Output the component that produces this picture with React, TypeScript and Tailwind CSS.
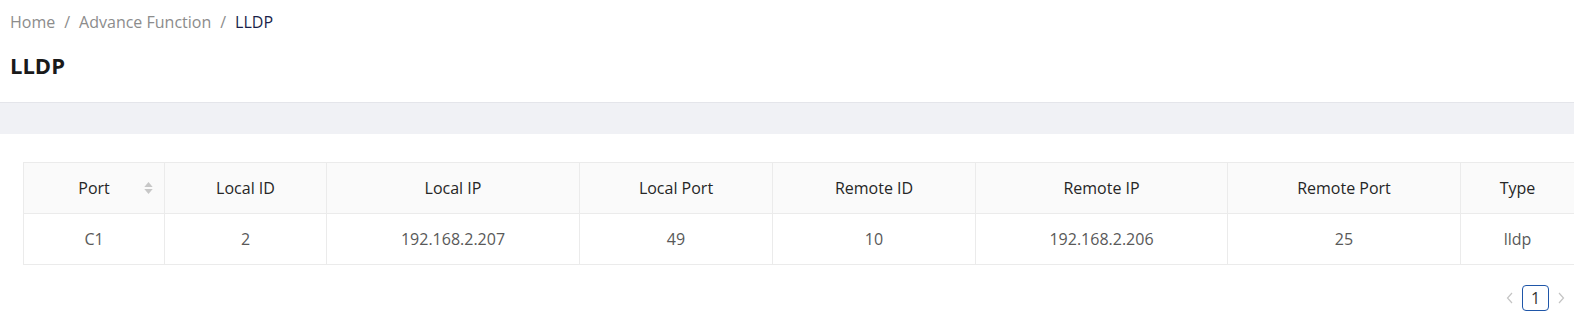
import React from 'react';

const cols = [
  { title: 'Port', w: 'w-[141px]', sort: true },
  { title: 'Local ID', w: 'w-[162px]' },
  { title: 'Local IP', w: 'w-[253px]' },
  { title: 'Local Port', w: 'w-[193px]' },
  { title: 'Remote ID', w: 'w-[203px]' },
  { title: 'Remote IP', w: 'w-[252px]' },
  { title: 'Remote Port', w: 'w-[233px]' },
  { title: 'Type', w: 'w-[114px]' },
];

const row = ['C1', '2', '192.168.2.207', '49', '10', '192.168.2.206', '25', 'lldp'];

function SortIcon() {
  return (
    <span className="absolute right-[11px] top-1/2 -translate-y-1/2 flex flex-col gap-[2px]">
      <svg width="9" height="5" viewBox="0 0 10 6"><path d="M5 0L10 6H0z" fill="#c7c7c7" /></svg>
      <svg width="9" height="5" viewBox="0 0 10 6"><path d="M0 0H10L5 6z" fill="#c7c7c7" /></svg>
    </span>
  );
}

function Chevron({ dir }: { dir: 'l' | 'r' }) {
  return (
    <svg width="12" height="14" viewBox="0 0 12 14" fill="none" stroke="#c4c4c4" strokeWidth="1.2">
      {dir === 'l' ? <path d="M8 2L3.5 7L8 12" /> : <path d="M4 2L8.5 7L4 12" />}
    </svg>
  );
}

export default function App() {
  return (
    <div className="w-full h-[332px] bg-white overflow-hidden font-['Open_Sans','Noto_Sans',sans-serif]">
      <div className="px-[10px] pt-[10px] h-[102px]">
        <div className="flex items-center gap-[9px] text-[16px] leading-[24px] text-[#8c8c8c]">
          <span>Home</span>
          <span>/</span>
          <span>Advance Function</span>
          <span>/</span>
          <span className="text-[#1a1f4a]">LLDP</span>
        </div>
        <h1 className="mt-[16px] text-[22px] font-bold leading-[30px] text-[#1a1a1a]">LLDP</h1>
      </div>
      <div className="h-[32px] bg-[#f0f1f5] border-t border-[#e4e5ea]" />
      <div className="pt-[28px] pl-[23px]">
        <table className="w-[1551px] table-fixed border-collapse border border-[#ebebeb] text-[16px]">
          <thead>
            <tr className="bg-[#fafafa]">
              {cols.map((c) => (
                <th
                  key={c.title}
                  className={`${c.w} relative h-[51px] p-0 border border-[#ebebeb] font-normal text-[#262626] text-center`}
                >
                  {c.title}
                  {c.sort && <SortIcon />}
                </th>
              ))}
            </tr>
          </thead>
          <tbody>
            <tr>
              {row.map((v, i) => (
                <td key={i} className="h-[51px] p-0 border border-[#ebebeb] text-center text-[#595959]">
                  {v}
                </td>
              ))}
            </tr>
          </tbody>
        </table>
        <div className="flex justify-end items-center gap-[6px] mt-[20px] pr-[7px]">
          <Chevron dir="l" />
          <span className="w-[27px] h-[26px] flex items-center justify-center border border-[#1f56a8] rounded-[4px] text-[#333] text-[16px]">1</span>
          <Chevron dir="r" />
        </div>
      </div>
    </div>
  );
}
